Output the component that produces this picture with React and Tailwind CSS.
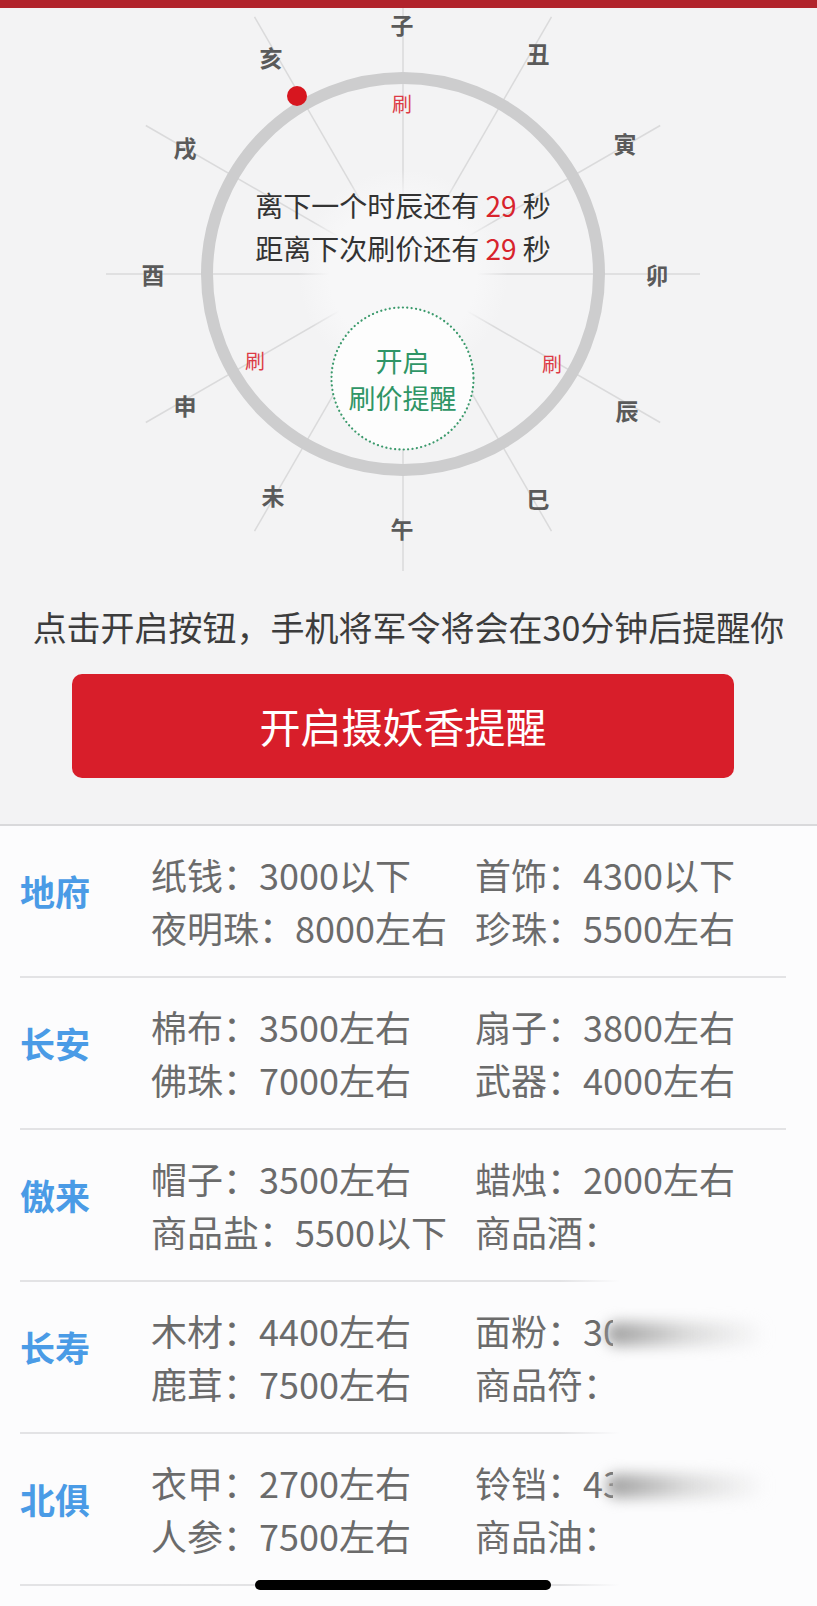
const LABELS = [
  ["子", 402, 24],
  ["丑", 538, 53],
  ["寅", 625, 143],
  ["卯", 657, 274],
  ["辰", 627, 410],
  ["巳", 538, 498],
  ["午", 402, 528],
  ["未", 273, 495],
  ["申", 185, 405],
  ["酉", 153, 274],
  ["戌", 185, 147],
  ["亥", 271, 57],
];
const CX = 403;
const CY = 274;

const ROWS = [
  { city: "地府", items: [["纸钱：3000以下", "首饰：4300以下"], ["夜明珠：8000左右", "珍珠：5500左右"]] },
  { city: "长安", items: [["棉布：3500左右", "扇子：3800左右"], ["佛珠：7000左右", "武器：4000左右"]] },
  { city: "傲来", items: [["帽子：3500左右", "蜡烛：2000左右"], ["商品盐：5500以下", "商品酒："]], fade: true },
  { city: "长寿", items: [["木材：4400左右", "面粉：30"], ["鹿茸：7500左右", "商品符："]], fade: true, smudge: true },
  { city: "北俱", items: [["衣甲：2700左右", "铃铛：43"], ["人参：7500左右", "商品油："]], fade: true, smudge: true },
];

function Dial() {
  const spokes = [0, 1, 2, 3, 4, 5, 6, 7, 8, 9, 10, 11].map((i) => {
    const a = ((-90 + i * 30) * Math.PI) / 180;
    return { i, cos: Math.cos(a), sin: Math.sin(a) };
  });

  return (
    <svg width="817" height="572" viewBox="0 8 817 572" className="block">
      <defs>
        <radialGradient id="glow">
          <stop offset="0" stopColor="#f7f7f8" stopOpacity="1" />
          <stop offset="0.7" stopColor="#f7f7f8" stopOpacity="1" />
          <stop offset="1" stopColor="#f7f7f8" stopOpacity="0" />
        </radialGradient>
      </defs>

      {spokes.map((s) => (
        <line
          key={s.i}
          x1={CX}
          y1={CY}
          x2={CX + 297 * s.cos}
          y2={CY + 297 * s.sin}
          stroke="#dadadb"
          strokeWidth="1.5"
        />
      ))}
      <circle cx={CX} cy={CY} r="105" fill="url(#glow)" />
      <circle cx={CX} cy={CY} r="196" fill="none" stroke="#cdcdce" strokeWidth="12" />

      {LABELS.map(([name, x, y]) => (
        <text
          key={name}
          x={x}
          y={y}
          textAnchor="middle"
          dominantBaseline="central"
          fontSize="23"
          fontWeight="700"
          fill="#5a5a5a"
        >
          {name}
        </text>
      ))}

      <circle cx="297" cy="96" r="10" fill="#d7161f" />

      <g fontSize="20" fill="#dd3b45" textAnchor="middle" dominantBaseline="central">
        <text x="402" y="103">刷</text>
        <text x="255" y="360">刷</text>
        <text x="552" y="363">刷</text>
      </g>

      <g fontSize="28" fill="#333" textAnchor="middle" dominantBaseline="central">
        <text x="403" y="205">
          离下一个时辰还有 <tspan fill="#d8232c">29</tspan> 秒
        </text>
        <text x="403" y="248">
          距离下次刷价还有 <tspan fill="#d8232c">29</tspan> 秒
        </text>
      </g>

      <circle
        cx="402.5"
        cy="378.5"
        r="71"
        fill="#fdfdfd"
        stroke="#3b9a6c"
        strokeWidth="2.2"
        strokeDasharray="0.1 4.3"
        strokeLinecap="round"
      />
      <g fontSize="27" fill="#2f9566" textAnchor="middle" dominantBaseline="central">
        <text x="402.5" y="360">开启</text>
        <text x="402.5" y="397">刷价提醒</text>
      </g>
    </svg>
  );
}

function PriceRow({ row }) {
  return (
    <div>
      <div className="relative h-[150px] flex items-center">
        <div className="w-[151px] pl-[20px] pb-5 text-[35px] font-bold text-[#4a9be6]">
          {row.city}
        </div>
        <div className="grid grid-cols-[324px_auto] text-[36px] leading-[53px] text-[#6b6b6b]">
          {row.items.flat().map((t, i) => (
            <span key={i} className="whitespace-nowrap">{t}</span>
          ))}
        </div>
        {row.smudge && (
          <>
            <div className="absolute left-[613px] top-[26px] w-[204px] h-[50px] bg-[#fcfcfd]" />
            <div className="absolute left-[606px] top-[40px] w-[160px] h-[24px] rounded-full bg-linear-to-r from-[#9e9e9e] via-[#dadada] to-transparent blur-[7px]" />
          </>
        )}
      </div>
      {row.fade ? (
        <div className="ml-5 h-0.5 w-[600px] bg-linear-to-r from-[#e3e3e5] from-90% to-transparent" />
      ) : (
        <div className="ml-5 h-0.5 w-[766px] bg-[#e3e3e5]" />
      )}
    </div>
  );
}

export default function App() {
  return (
    <div className="relative w-[817px] h-[1606px] overflow-hidden bg-[#fcfcfd] font-['Noto_Sans_CJK_SC','Noto_Sans',sans-serif]">
      <div className="h-[826px] bg-[#f3f3f4] border-b-2 border-[#d9d9db]">
        <div className="h-2 bg-[#b1232b]" />
        <Dial />
        <p className="mt-[23px] text-center text-[34px] leading-[48px] text-[#3c3c3c]">
          点击开启按钮，手机将军令将会在30分钟后提醒你
        </p>
        <button className="block mt-[23px] ml-[72px] w-[662px] h-[104px] rounded-[10px] bg-[#d81e2a] text-white text-[41px]">
          开启摄妖香提醒
        </button>
      </div>

      {ROWS.map((row) => (
        <PriceRow key={row.city} row={row} />
      ))}

      <div className="absolute left-[255px] top-[1580px] w-[296px] h-[10px] rounded-full bg-black" />
    </div>
  );
}
